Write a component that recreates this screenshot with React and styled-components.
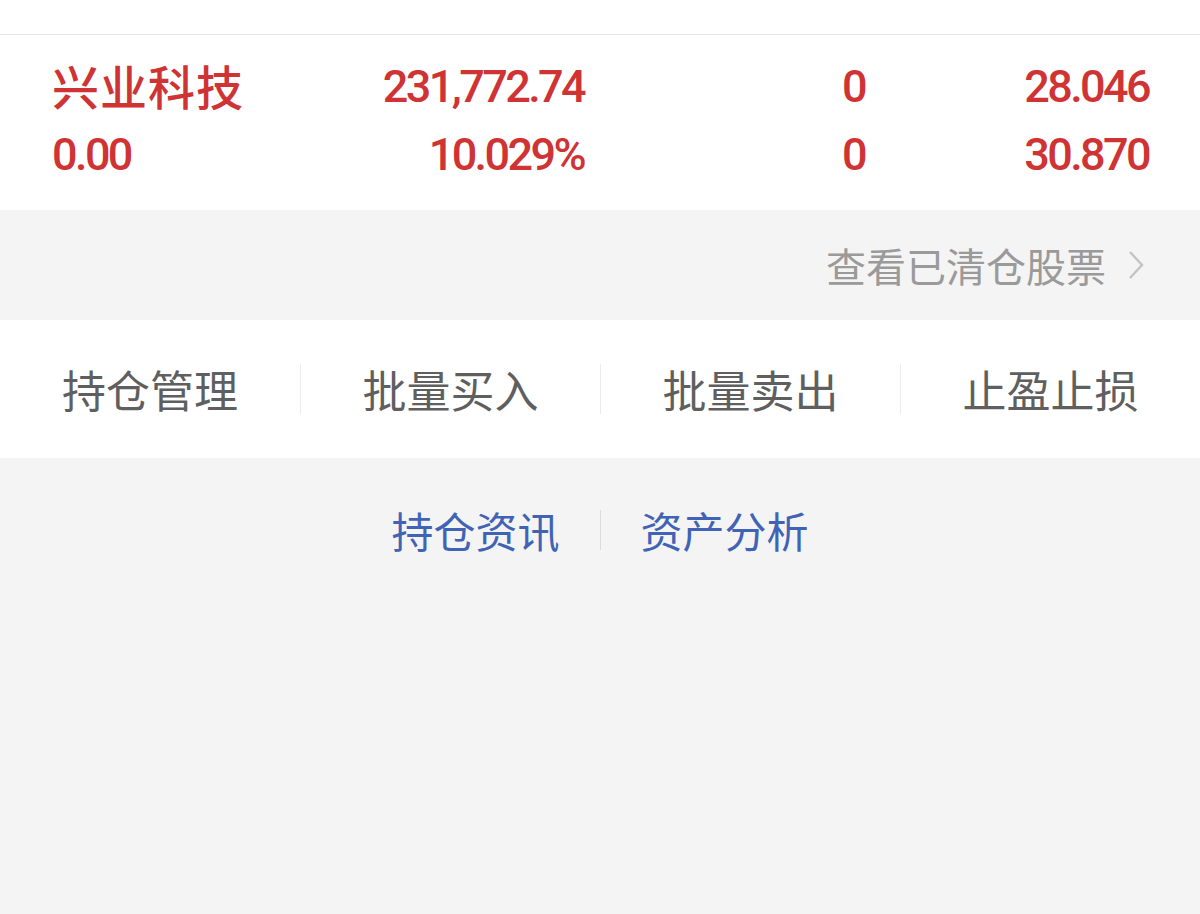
import styled, { createGlobalStyle } from "styled-components";

const GlobalStyle = createGlobalStyle`
  html, body {
    margin: 0;
    padding: 0;
    background: #f4f4f4;
  }
  body {
    font-family: "Noto Sans CJK SC", "Noto Sans", sans-serif;
  }
`;

//Holding row data
const holding = {
  name: "兴业科技",
  value: "231,772.74",
  qty: "0",
  cost: "28.046",
  profit: "0.00",
  ratio: "10.029%",
  available: "0",
  price: "30.870",
};

const actions = ["持仓管理", "批量买入", "批量卖出", "止盈止损"];
const links = ["持仓资讯", "资产分析"];

const App = () => {
  return (
    <>
      <GlobalStyle />
      <Page>
        <TopStrip />
        <HoldingCard>
          <HoldingGrid>
            <Name>{holding.name}</Name>
            <Num>{holding.value}</Num>
            <Num>{holding.qty}</Num>
            <Num>{holding.cost}</Num>
            <Num $left>{holding.profit}</Num>
            <Num>{holding.ratio}</Num>
            <Num>{holding.available}</Num>
            <Num>{holding.price}</Num>
          </HoldingGrid>
        </HoldingCard>
        <ClearedBar>
          <ClearedLink>
            查看已清仓股票
            <Chevron viewBox="0 0 16 30" aria-hidden="true">
              <polyline points="2,2 14,15 2,28" />
            </Chevron>
          </ClearedLink>
        </ClearedBar>
        <ActionBar>
          {actions.map((a, i) => (
            <ActionButton key={a} $first={i === 0}>
              {a}
            </ActionButton>
          ))}
        </ActionBar>
        <LinkRow>
          {links.map((l, i) => (
            <LinkItem key={l} $first={i === 0}>
              {l}
            </LinkItem>
          ))}
        </LinkRow>
      </Page>
    </>
  );
};

const Page = styled.div`
  min-height: 914px;
  background: #f4f4f4;
  display: flex;
  flex-direction: column;
`;

const TopStrip = styled.div`
  height: 34px;
  background: #fff;
  border-bottom: 1px solid #e6e6e6;
`;

const HoldingCard = styled.div`
  background: #fff;
  padding: 18px 51px 21px 52px;
`;

const HoldingGrid = styled.div`
  display: grid;
  grid-template-columns: 268px 264px 281px 284px;
  grid-auto-rows: 68px;
  align-items: center;
  color: #d03333;
`;

const Name = styled.div`
  font-family: "Noto Sans CJK SC", sans-serif;
  font-size: 47px;
  font-weight: 500;
  line-height: 64px;
  letter-spacing: 1px;
  margin-top: -4px;
`;

const Num = styled.div`
  font-family: Roboto, "Liberation Sans", sans-serif;
  font-size: 45px;
  font-weight: 500;
  line-height: 68px;
  letter-spacing: -2.6px;
  text-align: ${(p) => (p.$left ? "left" : "right")};
`;

const ClearedBar = styled.div`
  height: 110px;
  display: flex;
  align-items: center;
  justify-content: flex-end;
  padding-right: 56px;
`;

const ClearedLink = styled.div`
  display: flex;
  align-items: center;
  gap: 22px;
  font-size: 40px;
  color: #9a9a9a;
`;

const Chevron = styled.svg`
  width: 16px;
  height: 30px;
  fill: none;
  stroke: #c4c4c4;
  stroke-width: 2.4;
`;

const ActionBar = styled.div`
  height: 138px;
  background: #fff;
  display: grid;
  grid-template-columns: repeat(4, 1fr);
  align-items: center;
`;

const ActionButton = styled.div`
  text-align: center;
  font-size: 44px;
  line-height: 50px;
  color: #5f5f5f;
  border-left: ${(p) => (p.$first ? "none" : "1px solid #ececec")};
`;

const LinkRow = styled.div`
  display: flex;
  justify-content: center;
  align-items: center;
  padding-top: 52px;
`;

const LinkItem = styled.div`
  font-size: 42px;
  line-height: 40px;
  color: #4163b5;
  padding: 0 ${(p) => (p.$first ? "40px" : "0")} 0
    ${(p) => (p.$first ? "0" : "40px")};
  border-left: ${(p) => (p.$first ? "none" : "1px solid #dcdcdc")};
`;

export default App;
